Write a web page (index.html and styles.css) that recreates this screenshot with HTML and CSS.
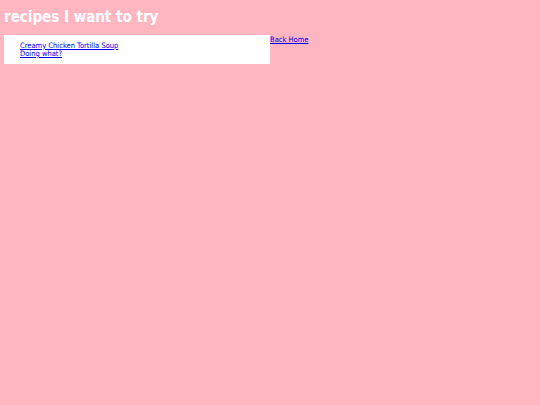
FILE: index.html
```html
<!DOCTYPE html>
<html>
<head>
<meta charset="utf-8">
<link rel="stylesheet" href="styles.css">
</head>
<body>
<h1 class="title">recipes I want to try</h1>
<div class="row">
  <div class="box">
    <ul class="list">
      <li><a href="#">Creamy Chicken Tortilla Soup</a></li>
      <li><a href="#">Doing what?</a></li>
    </ul>
  </div>
  <a class="home" href="#">Back Home</a>
</div>
</body>
</html>
```
FILE: styles.css
```css
html, body {
  background: #ffb6c1;
}
body {
  margin: 0;
  padding: 0 4px;
  font-family: "DejaVu Sans Condensed", "DejaVu Sans", Verdana, sans-serif;
  font-size: 7.5px;
}
.title {
  margin: 0;
  padding-top: 8px;
  height: 35px;
  box-sizing: border-box;
  color: #fff;
  font-size: 15px;
  font-weight: bold;
  line-height: 19px;
}
.row {
  display: flex;
  align-items: flex-start;
}
.box {
  background: #fff;
  width: 266px;
  height: 29px;
  box-sizing: border-box;
  padding: 7px 0 0 16px;
}
.list {
  list-style: none;
  margin: 0;
  padding: 0;
  line-height: 8px;
}
a {
  color: #0000ee;
}
.home {
  display: block;
  line-height: 9px;
}
```
